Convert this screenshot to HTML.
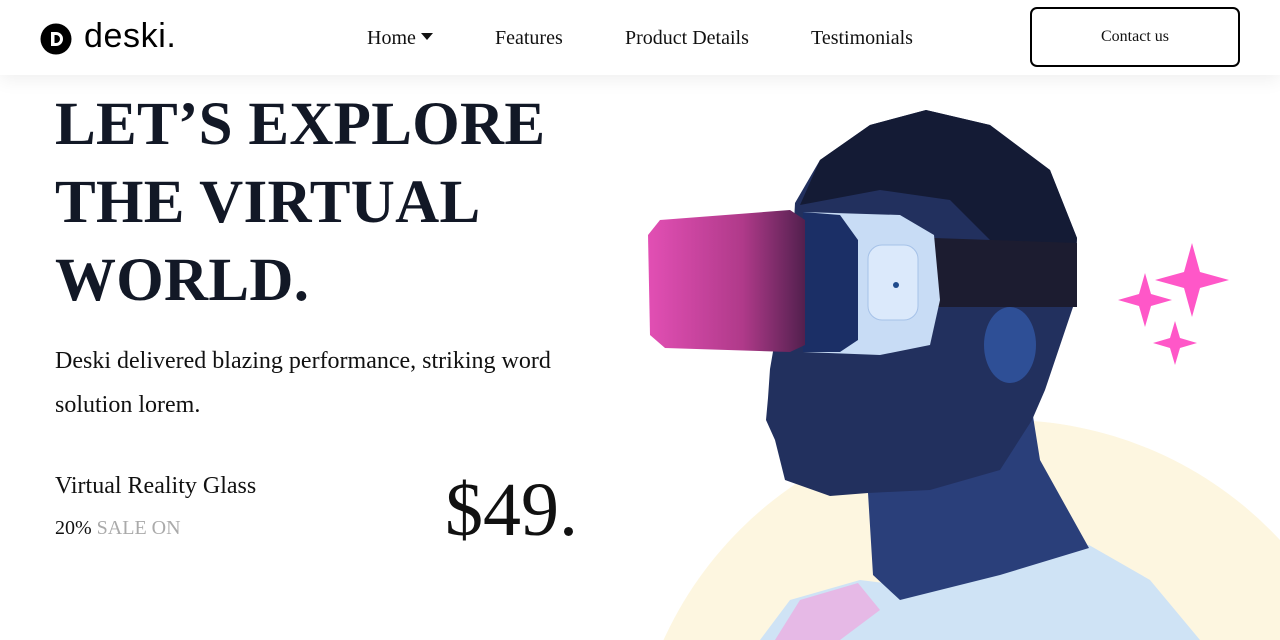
<!DOCTYPE html>
<html><head><meta charset="utf-8"><style>
*{margin:0;padding:0;box-sizing:border-box}
body{width:1280px;height:640px;overflow:hidden;background:#fff;position:relative;font-family:"Liberation Serif",serif;color:#111}
.hdr{position:absolute;left:0;top:0;width:1280px;height:75px;background:#fff;box-shadow:0 4px 18px rgba(0,0,0,0.07);z-index:5}
.a{position:absolute;white-space:nowrap}
.nav{font-size:20px;top:27px;color:#111}
h1{position:absolute;left:55px;top:86px;font-size:61px;line-height:78px;font-weight:bold;color:#121826;letter-spacing:0.3px}
</style></head><body>
<svg class="a" style="left:0;top:0" width="1280" height="640">
<circle cx="1005" cy="795" r="375" fill="#fdf6e0"/>
<path d="M760 640 L790 600 L860 580 L900 585 L1000 570 L1089 545 L1150 580 L1200 640 Z" fill="#cfe3f5"/>
<path d="M775 640 L800 600 L858 583 L880 610 L840 640Z" fill="#e6b9e6"/>
<path d="M868 493 L873 575 L900 600 L1000 575 L1089 548 L1040 460 L1032 410 Z" fill="#2a3f7a"/>
<path d="M795 203 L820 160 L870 125 L926 110 L990 125 L1050 170 L1077 238 L1073 307 L1045 390 L1032 420 L1000 470 L930 490 L868 493 L830 496 L785 480 L775 440 L766 420 L768 398 L770 369 L775 340 L790 300 Z" fill="#22305e"/>
<path d="M820 160 L870 125 L926 110 L990 125 L1050 170 L1077 238 L1073 307 L1000 250 L950 200 L880 190 L800 205 Z" fill="#141b35"/>
<ellipse cx="1010" cy="345" rx="26" ry="38" fill="#2e4f96"/>
<path d="M934 238 L1077 243 L1077 307 L934 307 Z" fill="#1c1c30"/>
<path d="M803 212 L900 215 L934 235 L940 300 L930 345 L880 355 L803 352 Z" fill="#c8dcf5"/>
<rect x="868" y="245" width="50" height="75" rx="14" fill="#dbe9fb" stroke="#a6c2e8"/>
<circle cx="896" cy="285" r="3" fill="#1e4a8c"/>
<path d="M803 212 L840 215 L858 240 L858 340 L840 352 L803 352 Z" fill="#1b2f66"/>
<defs><linearGradient id="g" x1="0" y1="0" x2="1" y2="0"><stop offset="0" stop-color="#e24fb4"/><stop offset="0.6" stop-color="#b03a8a"/><stop offset="1" stop-color="#52204e"/></linearGradient></defs>
<path d="M660 220 L790 210 L805 220 L805 345 L790 352 L665 348 L650 335 L648 235 Z" fill="url(#g)"/>
<path d="M1192 243 L1200 272 L1229 280 L1200 288 L1192 317 L1184 288 L1155 280 L1184 272Z" fill="#ff57c8"/>
<path d="M1145 273 L1151 294 L1172 300 L1151 306 L1145 327 L1139 306 L1118 300 L1139 294Z" fill="#ff57c8"/>
<path d="M1175 321 L1180 338 L1197 343 L1180 348 L1175 365 L1170 348 L1153 343 L1170 338Z" fill="#ff57c8"/>
</svg>
<div class="hdr">
 <svg class="a" style="left:40px;top:23px" width="32" height="32"><circle cx="16" cy="16" r="15.5" fill="#000"/><path d="M11 9 H16 A7 7 0 0 1 16 23 H11 Z M14.5 12 V20 H16 A4 4 0 0 0 16 12 Z" fill="#fff" fill-rule="evenodd"/></svg>
 <div class="a" style="left:84px;top:17px;font-family:'Liberation Sans',sans-serif;font-size:34px;color:#000;letter-spacing:0.6px">deski.</div>
 <div class="a nav" style="left:367px">Home <span style="display:inline-block;width:0;height:0;border-left:6px solid transparent;border-right:6px solid transparent;border-top:7px solid #111;vertical-align:4px"></span></div>
 <div class="a nav" style="left:495px">Features</div>
 <div class="a nav" style="left:625px">Product Details</div>
 <div class="a nav" style="left:811px">Testimonials</div>
 <div class="a" style="left:1030px;top:7px;width:210px;height:60px;border:2px solid #000;border-radius:7px;font-size:16px;line-height:56px;text-align:center">Contact us</div>
</div>
<h1>LET’S EXPLORE<br>THE VIRTUAL<br>WORLD.</h1>
<div class="a" style="left:55px;top:339px;font-size:24px;line-height:44px;color:#111">Deski delivered blazing performance, striking word<br>solution lorem.</div>
<div class="a" style="left:55px;top:473px;font-size:24px">Virtual Reality Glass</div>
<div class="a" style="left:55px;top:517px;font-size:20px">20% <span style="color:#aaa">SALE ON</span></div>
<div class="a" style="left:445px;top:465px;font-size:76px;line-height:90px">$49.</div>
</body></html>
